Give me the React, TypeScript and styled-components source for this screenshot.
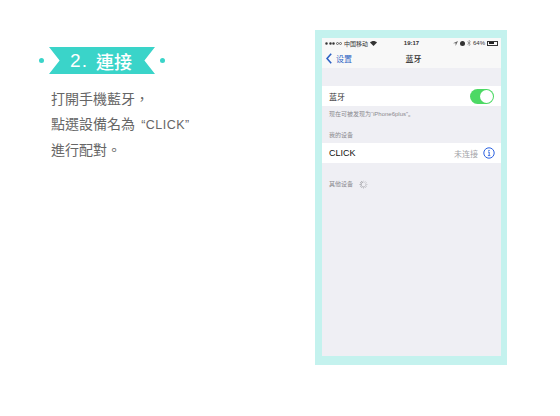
import React from "react";
import styled, { createGlobalStyle } from "styled-components";

const GlobalStyle = createGlobalStyle`
  html, body {
    margin: 0;
    padding: 0;
    background: #fff;
  }
`;

const CJK = `"Noto Sans CJK TC", "Noto Sans CJK SC", sans-serif`;
const SANS = `"Liberation Sans", "Noto Sans CJK SC", sans-serif`;

const Page = styled.div`
  width: 560px;
  height: 416px;
  display: flex;
  overflow: hidden;
  background: #fff;
`;

const Intro = styled.div`
  width: 315px;
  padding: 47px 0 0 39px;
  box-sizing: border-box;
`;

const Heading = styled.div`
  display: flex;
  align-items: center;
  gap: 5px;
`;

const Dot = styled.span`
  width: 5px;
  height: 5px;
  border-radius: 50%;
  background: #3ad4c9;
`;

const Ribbon = styled.div`
  width: 106px;
  height: 27px;
  background: #3ad4c9;
  clip-path: polygon(0 0, 100% 0, 90% 50%, 100% 100%, 0 100%, 10% 50%);
  color: #fff;
  display: flex;
  align-items: center;
  justify-content: center;
  gap: 8px;
  padding-right: 2px;
  box-sizing: border-box;
  font-family: ${SANS};
  font-size: 19px;
  letter-spacing: 1px;
`;

const RibbonTitle = styled.span`
  font-family: ${CJK};
  font-size: 18px;
  font-weight: 500;
  letter-spacing: 0;
`;

const Body = styled.div`
  margin: 12px 0 0 12px;
  color: #666;
  font-family: ${CJK};
  font-size: 14px;
  line-height: 24.5px;
  white-space: nowrap;
`;

const Latin = styled.span`
  font-family: ${SANS};
  font-size: 12.5px;
  letter-spacing: 0.5px;
  margin-left: 3px;
`;

const Frame = styled.div`
  width: 179px;
  height: 318px;
  margin: 30px 0 0 0;
  padding: 8px 6px 9px 7px;
  background: #c4f2ee;
  box-sizing: content-box;
  display: flex;
  flex-direction: column;
  font-family: ${CJK};
`;

const Screen = styled.div`
  flex: 1;
  background: #efeff4;
  display: flex;
  flex-direction: column;
`;

const Chrome = styled.div`
  background: #f8f8f8;
  height: 30px;
  flex: none;
`;

const StatusBar = styled.div`
  height: 10px;
  padding: 0 3px;
  display: grid;
  grid-template-columns: 1fr auto 1fr;
  align-items: center;
  font-size: 6px;
  color: #333;
`;

const StatusGroup = styled.div<{ $end?: boolean }>`
  display: flex;
  align-items: center;
  gap: 2px;
  justify-content: ${(p) => (p.$end ? "flex-end" : "flex-start")};
`;

const Signal = styled.div`
  display: flex;
  gap: 0.5px;
`;

const SignalDot = styled.span<{ $on: boolean }>`
  width: 3px;
  height: 3px;
  border-radius: 50%;
  box-sizing: border-box;
  background: ${(p) => (p.$on ? "#333" : "transparent")};
  border: 0.5px solid #666;
`;

const Time = styled.span`
  font-family: ${SANS};
  font-weight: 700;
  font-size: 6px;
`;

const Percent = styled.span`
  font-family: ${SANS};
  font-size: 6px;
`;

const Battery = styled.span`
  width: 11px;
  height: 5px;
  border: 0.5px solid #333;
  box-sizing: border-box;
  padding: 0.5px;
  display: flex;

  &::before {
    content: "";
    width: 64%;
    background: #222;
  }
`;

const NavBar = styled.div`
  height: 20px;
  display: grid;
  grid-template-columns: 1fr auto 1fr;
  align-items: center;
  padding: 0 0 0 4px;
  font-size: 8px;
`;

const Back = styled.div`
  display: flex;
  align-items: center;
  gap: 4px;
  color: #2c62c4;
`;

const NavTitle = styled.span`
  color: #333;
  font-weight: 500;
`;

const Row = styled.div<{ $top: number }>`
  height: 20px;
  flex: none;
  margin-top: ${(p) => p.$top}px;
  padding: 0 7px;
  background: #fff;
  display: flex;
  align-items: center;
  justify-content: space-between;
  font-size: 8px;
  color: #333;
`;

const Note = styled.div<{ $top: number }>`
  margin: ${(p) => p.$top}px 0 0 7px;
  height: 8px;
  line-height: 8px;
  font-family: ${SANS};
  font-size: 6px;
  color: #8a8a8f;
  display: flex;
  align-items: center;
  gap: 6px;
`;

const DeviceName = styled.span`
  font-family: ${SANS};
  font-size: 9px;
  color: #111;
`;

const RowEnd = styled.div`
  display: flex;
  align-items: center;
  gap: 5px;
  margin-right: -1px;
  color: #a3a3a8;
  font-size: 8px;
`;

const Switch = styled.span`
  width: 24px;
  height: 15px;
  border-radius: 8px;
  background: #4cd964;
  display: flex;
  justify-content: flex-end;
  padding: 1px;
  box-sizing: border-box;

  &::after {
    content: "";
    width: 13px;
    height: 13px;
    border-radius: 50%;
    background: #fff;
  }
`;

const InfoIcon = () => (
  <svg width="12" height="12" viewBox="0 0 12 12" fill="none">
    <circle cx="6" cy="6" r="5.2" stroke="#2c62e0" strokeWidth="1" />
    <circle cx="6" cy="3.4" r="0.7" fill="#2c62e0" />
    <path d="M5 5h1.2v3.4M4.9 8.6h2.4" stroke="#2c62e0" strokeWidth="0.9" />
  </svg>
);

const Chevron = () => (
  <svg width="6" height="11" viewBox="0 0 6 11" fill="none">
    <path d="M5.2 0.8L1 5.5l4.2 4.7" stroke="#2c62c4" strokeWidth="1.6" />
  </svg>
);

const Wifi = () => (
  <svg width="7" height="5" viewBox="0 0 7 5" fill="#333">
    <path d="M0 1.6C2 -0.4 5 -0.4 7 1.6L3.5 5z" />
  </svg>
);

const LocationArrow = () => (
  <svg width="5" height="5" viewBox="0 0 5 5" fill="#666">
    <path d="M5 0L0 2.2h2.6V5z" />
  </svg>
);

const Moon = () => (
  <svg width="5" height="5" viewBox="0 0 5 5" fill="#333">
    <circle cx="2.5" cy="2.5" r="2.5" />
  </svg>
);

const BluetoothMark = () => (
  <svg width="4" height="6" viewBox="0 0 4 6" fill="none" stroke="#666" strokeWidth="0.5">
    <path d="M0.3 1.5L3.4 4.3 2 5.6V0.4L3.4 1.7 0.3 4.5" />
  </svg>
);

const Spinner = () => (
  <svg width="9" height="9" viewBox="0 0 10 10" stroke="#8a8a8f" strokeWidth="0.8">
    {Array.from({ length: 12 }, (_, i) => (
      <line
        key={i}
        x1="5"
        y1="0.5"
        x2="5"
        y2="3"
        opacity={0.25 + (i / 12) * 0.75}
        transform={`rotate(${i * 30} 5 5)`}
      />
    ))}
  </svg>
);

export default function App() {
  return (
    <Page>
      <GlobalStyle />
      <Intro>
        <Heading>
          <Dot />
          <Ribbon>
            <span>2.</span>
            <RibbonTitle>連接</RibbonTitle>
          </Ribbon>
          <Dot />
        </Heading>
        <Body>
          打開手機藍牙，
          <br />
          點選設備名為 <Latin>“CLICK”</Latin>
          <br />
          進行配對。
        </Body>
      </Intro>
      <Frame>
        <Screen>
          <Chrome>
            <StatusBar>
              <StatusGroup>
                <Signal>
                  {[1, 1, 1, 0, 0].map((on, i) => (
                    <SignalDot key={i} $on={!!on} />
                  ))}
                </Signal>
                <span>中国移动</span>
                <Wifi />
              </StatusGroup>
              <Time>19:17</Time>
              <StatusGroup $end>
                <LocationArrow />
                <Moon />
                <BluetoothMark />
                <Percent>64%</Percent>
                <Battery />
              </StatusGroup>
            </StatusBar>
            <NavBar>
              <Back>
                <Chevron />
                <span>设置</span>
              </Back>
              <NavTitle>蓝牙</NavTitle>
            </NavBar>
          </Chrome>
          <Row $top={18}>
            <span>蓝牙</span>
            <Switch />
          </Row>
          <Note $top={4}>现在可被发现为“iPhone6plus”。</Note>
          <Note $top={13}>我的设备</Note>
          <Row $top={4}>
            <DeviceName>CLICK</DeviceName>
            <RowEnd>
              <span>未连接</span>
              <InfoIcon />
            </RowEnd>
          </Row>
          <Note $top={17}>
            <span>其他设备</span>
            <Spinner />
          </Note>
        </Screen>
      </Frame>
    </Page>
  );
}
